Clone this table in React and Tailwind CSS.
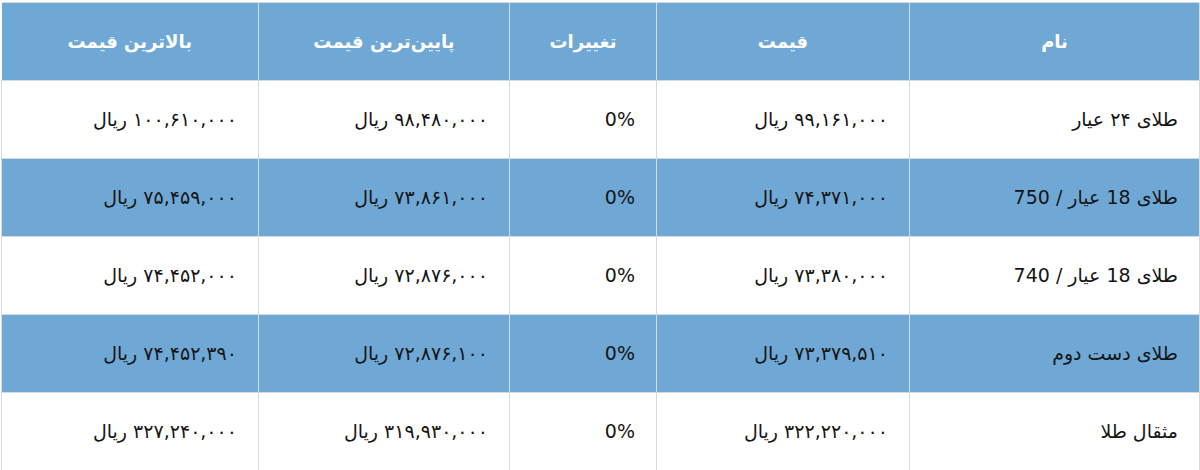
const rows = [
  ['طلای ۲۴ عیار', '۹۹,۱۶۱,۰۰۰ ریال', '0%', '۹۸,۴۸۰,۰۰۰ ریال', '۱۰۰,۶۱۰,۰۰۰ ریال'],
  ['طلای 18 عیار / 750', '۷۴,۳۷۱,۰۰۰ ریال', '0%', '۷۳,۸۶۱,۰۰۰ ریال', '۷۵,۴۵۹,۰۰۰ ریال'],
  ['طلای 18 عیار / 740', '۷۳,۳۸۰,۰۰۰ ریال', '0%', '۷۲,۸۷۶,۰۰۰ ریال', '۷۴,۴۵۲,۰۰۰ ریال'],
  ['طلای دست دوم', '۷۳,۳۷۹,۵۱۰ ریال', '0%', '۷۲,۸۷۶,۱۰۰ ریال', '۷۴,۴۵۲,۳۹۰ ریال'],
  ['مثقال طلا', '۳۲۲,۲۲۰,۰۰۰ ریال', '0%', '۳۱۹,۹۳۰,۰۰۰ ریال', '۳۲۷,۲۴۰,۰۰۰ ریال'],
];

const headers = ['نام', 'قیمت', 'تغییرات', 'پایین‌ترین قیمت', 'بالاترین قیمت'];
const widths = ['w-[290px]', 'w-[253px]', 'w-[147px]', 'w-[251px]', 'w-[257px]'];

export default function App() {
  return (
    <div className="w-[1200px] h-[470px] bg-white overflow-hidden pt-[2px]" dir="rtl">
      <table
        className="w-[1198px] table-fixed border-collapse text-[#151515]"
        style={{ fontFamily: '"DejaVu Sans", "Noto Sans", sans-serif' }}
      >
        <thead>
          <tr className="bg-[#6fa8d5] h-[78px]">
            {headers.map((h, i) => (
              <th
                key={i}
                className={`${widths[i]} border border-[#d3dbe2] border-l-0 text-white font-bold text-[18px] text-center`}
              >
                {h}
              </th>
            ))}
          </tr>
        </thead>
        <tbody>
          {rows.map((r, ri) => (
            <tr key={ri} className={`h-[78px] ${ri % 2 === 1 ? 'bg-[#6fa8d5]' : 'bg-white'}`}>
              {r.map((c, ci) => (
                <td
                  key={ci}
                  className="border border-[#d3dbe2] text-right pr-[21px] text-[19px]"
                >
                  {c}
                </td>
              ))}
            </tr>
          ))}
        </tbody>
      </table>
    </div>
  );
}
